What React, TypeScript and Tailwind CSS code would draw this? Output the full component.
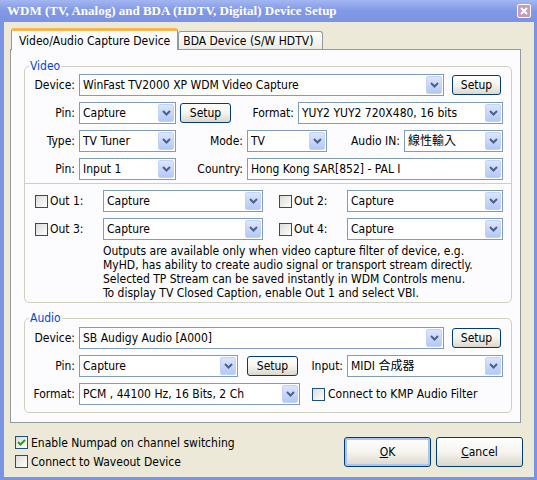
import React from 'react';

const Chevron = () => (
  <svg width="9" height="6" viewBox="0 0 9 6">
    <polyline points="1,1 4.5,4.5 8,1" fill="none" stroke="#4d6185" strokeWidth="2" />
  </svg>
);

const Combo = ({ w, value }: { w: string; value: string }) => (
  <div className={`${w} h-[22px] shrink-0 flex border border-[#7f9db9] bg-white`}>
    <div className="flex-1 pl-[3px] flex items-center whitespace-nowrap overflow-hidden">{value}</div>
    <div className="m-[1px] w-[16px] rounded-[2px] border border-[#c3d2fb] bg-gradient-to-b from-[#dbe5fe] to-[#b3c8f7] flex items-center justify-center">
      <Chevron />
    </div>
  </div>
);

const Btn = ({ w, children, extra = '' }: { w: string; children: React.ReactNode; extra?: string }) => (
  <div
    className={`${w} shrink-0 flex items-center justify-center border border-[#003c74] rounded-[3px] bg-gradient-to-b from-white via-[#f5f4ef] to-[#dcd7cb] ${extra}`}
  >
    {children}
  </div>
);

const Check = ({ checked = false }: { checked?: boolean }) => (
  <div className="w-[13px] h-[13px] shrink-0 border border-[#1c5180] bg-gradient-to-br from-[#dcdcd7] to-white flex items-center justify-center">
    {checked && (
      <svg width="9" height="9" viewBox="0 0 9 9">
        <polyline points="1,4 3.5,6.5 8,2" fill="none" stroke="#21a121" strokeWidth="2" />
      </svg>
    )}
  </div>
);

const Lbl = ({ w, children }: { w: string; children: React.ReactNode }) => (
  <div className={`${w} shrink-0 text-right pr-[4px] whitespace-nowrap`}>{children}</div>
);

const Row = ({ children }: { children: React.ReactNode }) => (
  <div className="flex items-center h-[22px]">{children}</div>
);

const OutRow = ({ a, b }: { a: string; b: string }) => (
  <div className="flex items-center h-[22px] pl-[10px]">
    <Check />
    <div className="w-[55px] shrink-0 pl-[2px]">{a}</div>
    <Combo w="w-[160px]" value="Capture" />
    <div className="ml-[16px]">
      <Check />
    </div>
    <div className="w-[55px] shrink-0 pl-[2px]">{b}</div>
    <Combo w="w-[156px]" value="Capture" />
  </div>
);

export default function App() {
  return (
    <div className="w-[537px] h-[480px] flex flex-col overflow-hidden text-[12px] text-black [font-family:'DejaVu_Sans_Condensed','Noto_Sans_CJK_TC',sans-serif]">
      {/* title bar */}
      <div className="h-[22px] shrink-0 flex items-center justify-between pl-[7px] pr-[6px] bg-gradient-to-b from-[#a3b6f1] via-[#8198e5] to-[#7b93e3]">
        <span className="text-white font-bold text-[13px] [font-family:'Liberation_Serif',serif] whitespace-nowrap">
          WDM (TV, Analog) and BDA (HDTV, Digital) Device Setup
        </span>
        <div className="w-[14px] h-[14px] border border-white rounded-[2px] bg-[#c59cbd] flex items-center justify-center">
          <svg width="8" height="8" viewBox="0 0 8 8">
            <path d="M1 1 L7 7 M7 1 L1 7" stroke="white" strokeWidth="2" />
          </svg>
        </div>
      </div>

      <div className="flex-1 flex flex-col bg-[#ece9d8] border-l-4 border-r-[3px] border-b-[3px] border-[#7b93e3]">
        <div className="pl-[6px] pt-[6px]">
          {/* tabs */}
          <div className="flex items-end h-[21px] pl-[1px]">
            <div className="relative z-10 -mb-px h-[22px] px-[7px] flex items-center bg-[#fcfcfe] border-x border-[#919b9c] border-t-[3px] border-t-[#f9b54a] rounded-t-[3px] whitespace-nowrap">
              Video/Audio Capture Device
            </div>
            <div className="h-[18px] w-[145px] flex items-center px-[4px] border border-b-0 border-[#919b9c] rounded-t-[3px] bg-gradient-to-b from-white to-[#ecebe5] whitespace-nowrap">
              BDA Device (S/W HDTV)
            </div>
          </div>

          {/* panel */}
          <div className="w-[511px] h-[374px] border border-[#919b9c] bg-[#fcfcfe] pl-[13px] pt-[9px]">
            <fieldset className="w-[488px] border border-[#d0d0bf] rounded-[5px] pb-[2px]">
              <legend className="ml-[4px] px-[1px] leading-[14px] text-[#0046d5]">Video</legend>
              <div className="flex flex-col gap-[6px] pt-[1px]">
                <Row>
                  <Lbl w="w-[54px]">Device:</Lbl>
                  <Combo w="w-[365px]" value="WinFast TV2000 XP WDM Video Capture" />
                  <Btn w="w-[49px] h-[20px] ml-[8px]">Setup</Btn>
                </Row>
                <Row>
                  <Lbl w="w-[54px]">Pin:</Lbl>
                  <Combo w="w-[97px]" value="Capture" />
                  <Btn w="w-[51px] h-[20px] ml-[4px]">Setup</Btn>
                  <Lbl w="w-[67px]">Format:</Lbl>
                  <Combo w="w-[205px]" value="YUY2 YUY2 720X480, 16 bits" />
                </Row>
                <Row>
                  <Lbl w="w-[54px]">Type:</Lbl>
                  <Combo w="w-[97px]" value="TV Tuner" />
                  <Lbl w="w-[71px]">Mode:</Lbl>
                  <Combo w="w-[80px]" value="TV" />
                  <Lbl w="w-[77px]">Audio IN:</Lbl>
                  <Combo w="w-[99px]" value="線性輸入" />
                </Row>
                <Row>
                  <Lbl w="w-[54px]">Pin:</Lbl>
                  <Combo w="w-[97px]" value="Input 1" />
                  <Lbl w="w-[71px]">Country:</Lbl>
                  <Combo w="w-[256px]" value="Hong Kong SAR[852] - PAL I" />
                </Row>
              </div>
              <div className="mt-[3px] h-px bg-[#d0d0bf]" />
              <div className="mt-[6px] flex flex-col gap-[6px]">
                <OutRow a="Out 1:" b="Out 2:" />
                <OutRow a="Out 3:" b="Out 4:" />
              </div>
              <p className="mt-[4px] pl-[78px] leading-[14px] whitespace-nowrap">
                Outputs are available only when video capture filter of device, e.g.
                <br />
                MyHD, has ability to create audio signal or transport stream directly.
                <br />
                Selected TP Stream can be saved instantly in WDM Controls menu.
                <br />
                To display TV Closed Caption, enable Out 1 and select VBI.
              </p>
            </fieldset>

            <fieldset className="mt-[8px] w-[488px] border border-[#d0d0bf] rounded-[5px] pb-[7px]">
              <legend className="ml-[4px] px-[1px] leading-[14px] text-[#0046d5]">Audio</legend>
              <div className="flex flex-col gap-[6px] pt-[2px]">
                <Row>
                  <Lbl w="w-[54px]">Device:</Lbl>
                  <Combo w="w-[365px]" value="SB Audigy Audio [A000]" />
                  <Btn w="w-[49px] h-[20px] ml-[8px]">Setup</Btn>
                </Row>
                <Row>
                  <Lbl w="w-[54px]">Pin:</Lbl>
                  <Combo w="w-[159px]" value="Capture" />
                  <Btn w="w-[51px] h-[20px] ml-[9px]">Setup</Btn>
                  <Lbl w="w-[49px]">Input:</Lbl>
                  <Combo w="w-[156px]" value="MIDI 合成器" />
                </Row>
                <Row>
                  <Lbl w="w-[54px]">Format:</Lbl>
                  <Combo w="w-[221px]" value="PCM , 44100 Hz, 16 Bits, 2 Ch" />
                  <div className="ml-[12px]">
                    <Check />
                  </div>
                  <span className="ml-[3px] whitespace-nowrap">Connect to KMP Audio Filter</span>
                </Row>
              </div>
            </fieldset>
          </div>
        </div>

        {/* bottom */}
        <div className="flex justify-between">
          <div className="pl-[11px] pt-[10px] flex flex-col">
            <div className="h-[19px] flex items-center">
              <Check checked />
              <span className="ml-[3px]">Enable Numpad on channel switching</span>
            </div>
            <div className="h-[19px] flex items-center">
              <Check />
              <span className="ml-[3px]">Connect to Waveout Device</span>
            </div>
          </div>
          <div className="pr-[11px] pt-[14px] flex gap-[5px]">
            <Btn w="w-[87px] h-[30px]" extra="shadow-[inset_0_0_0_2px_#a9c4f5]">
              <span>
                <span className="underline">O</span>K
              </span>
            </Btn>
            <Btn w="w-[87px] h-[30px]">
              <span>
                <span className="underline">C</span>ancel
              </span>
            </Btn>
          </div>
        </div>
      </div>
    </div>
  );
}
